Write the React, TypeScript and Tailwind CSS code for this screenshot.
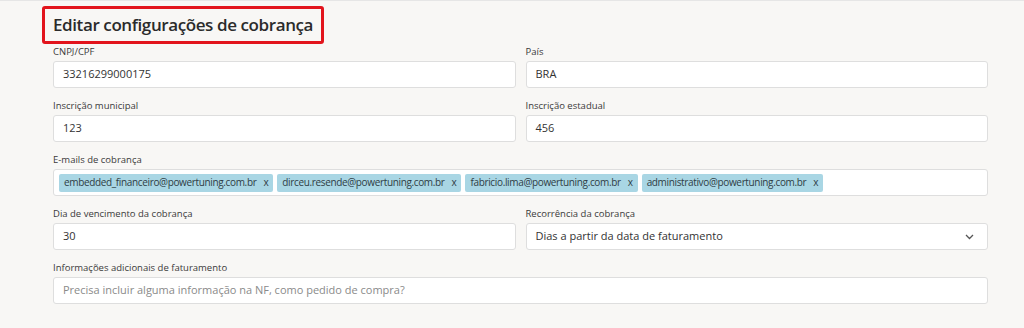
import React from "react";

const emails = [
  "embedded_financeiro@powertuning.com.br",
  "dirceu.resende@powertuning.com.br",
  "fabricio.lima@powertuning.com.br",
  "administrativo@powertuning.com.br",
];

const Label: React.FC<{ children: React.ReactNode }> = ({ children }) => (
  <div className="h-[16px] text-[9.5px] leading-[14px] text-[#3a3a3a]">{children}</div>
);

const Input: React.FC<{ value?: string; placeholder?: string }> = ({ value, placeholder }) => (
  <div className="flex h-[27px] items-center rounded-[3px] border border-[#dedede] bg-white px-[9px] text-[11px]">
    {value ? (
      <span className="text-[#333]">{value}</span>
    ) : (
      <span className="text-[#8a8a8a]">{placeholder}</span>
    )}
  </div>
);

const App: React.FC = () => {
  return (
    <div className="h-[328px] w-[1024px] overflow-hidden border-t border-[#e6e6e6] bg-[#f8f7f5] font-['Open_Sans',sans-serif]">
      <div className="pl-[42px] pt-[5px]">
        <div className="inline-flex h-[38px] items-center rounded-[3px] border-[3px] border-[#e2141c] px-[8px]">
          <h1 className="text-[17px] font-semibold tracking-[-0.4px] text-[#2b2b2b]">
            Editar configurações de cobrança
          </h1>
        </div>
      </div>

      <div className="mt-[1px] box-content grid w-[935px] grid-cols-2 gap-x-[10px] gap-y-[11px] pl-[53px]">
        <div>
          <Label>CNPJ/CPF</Label>
          <Input value="33216299000175" />
        </div>
        <div>
          <Label>País</Label>
          <Input value="BRA" />
        </div>
        <div>
          <Label>Inscrição municipal</Label>
          <Input value="123" />
        </div>
        <div>
          <Label>Inscrição estadual</Label>
          <Input value="456" />
        </div>
        <div className="col-span-2">
          <Label>E-mails de cobrança</Label>
          <div className="flex h-[27px] items-center gap-[4px] rounded-[3px] border border-[#dedede] bg-white px-[5px]">
            {emails.map((email) => (
              <span
                key={email}
                className="flex h-[18px] items-center gap-[7px] rounded-[2px] bg-[#a9d6e4] px-[5px] text-[10px] tracking-[-0.35px] text-[#2f3d44]"
              >
                {email}
                <span>x</span>
              </span>
            ))}
          </div>
        </div>
        <div>
          <Label>Dia de vencimento da cobrança</Label>
          <Input value="30" />
        </div>
        <div>
          <Label>Recorrência da cobrança</Label>
          <div className="flex h-[27px] items-center justify-between rounded-[3px] border border-[#dedede] bg-white pl-[9px] pr-[13px] text-[11px] text-[#333]">
            <span>Dias a partir da data de faturamento</span>
            <svg width="9" height="6" viewBox="0 0 9 6" fill="none">
              <path d="M1 1l3.5 3.5L8 1" stroke="#555" strokeWidth="1.3" />
            </svg>
          </div>
        </div>
        <div className="col-span-2">
          <Label>Informações adicionais de faturamento</Label>
          <Input placeholder="Precisa incluir alguma informação na NF, como pedido de compra?" />
        </div>
      </div>
    </div>
  );
};

export default App;
